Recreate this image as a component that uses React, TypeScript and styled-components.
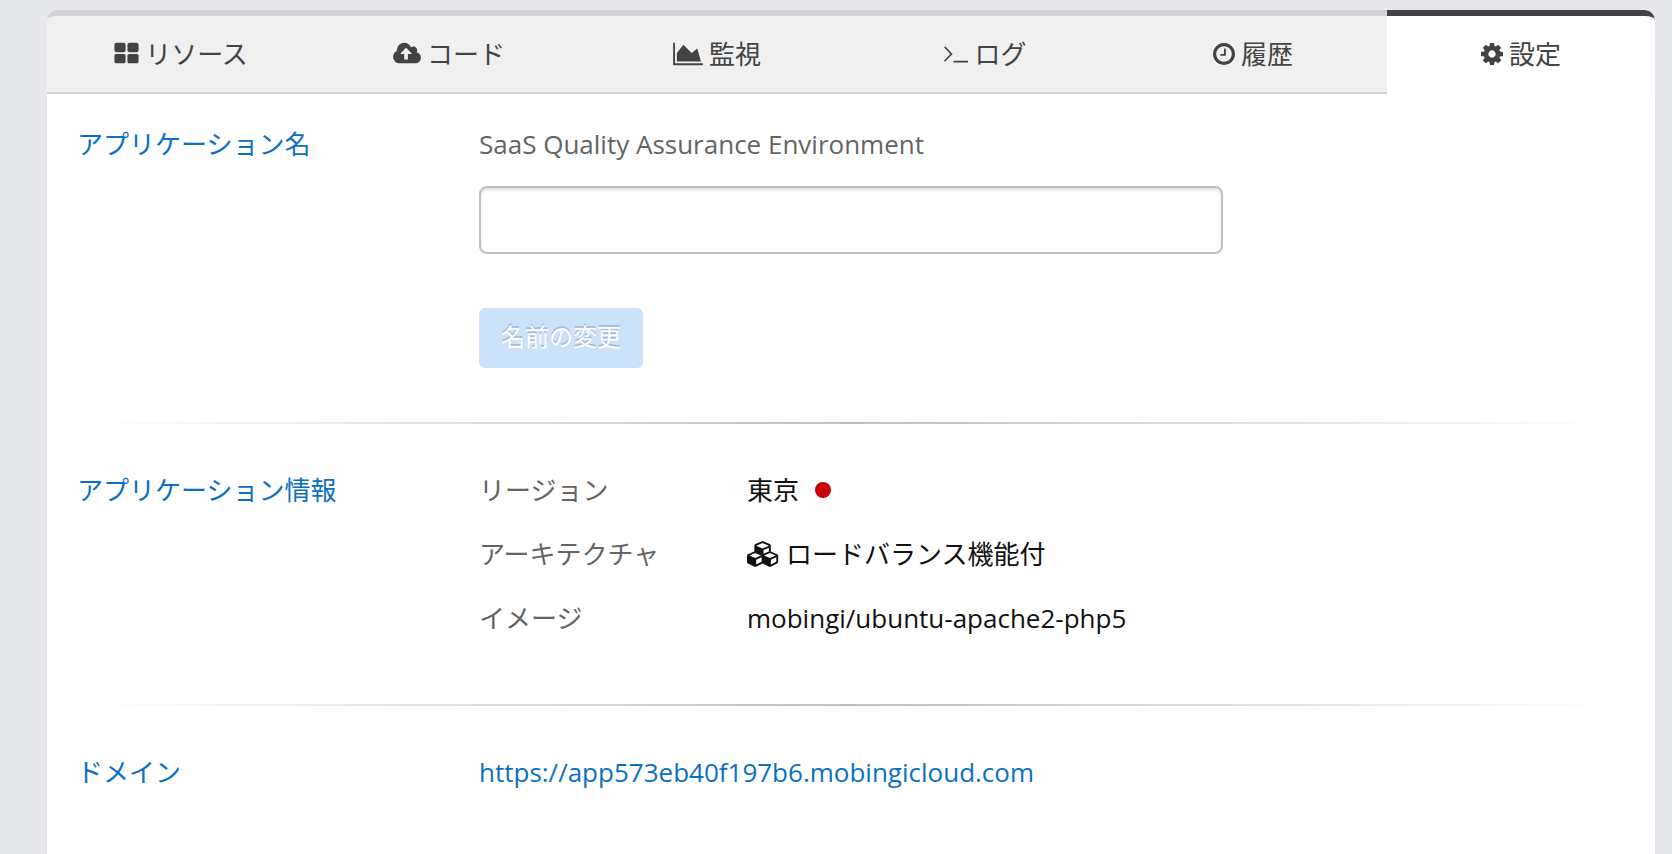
import React, { useState } from 'react';
import styled, { createGlobalStyle } from 'styled-components';

const GlobalStyle = createGlobalStyle`
  *, *::before, *::after { box-sizing: border-box; }
  body {
    margin: 0;
    background: #e6e8ec;
    color: #646464;
    font-family: "Open Sans", "Noto Sans CJK JP", sans-serif;
    font-size: 26px;
    line-height: 36px;
  }
`;

const Page = styled.main`
  display: flex;
  flex-direction: column;
  min-height: 100vh;
  padding: 10px 17px 0 47px;
`;

const Tabs = styled.nav`
  display: grid;
  grid-template-columns: repeat(6, 1fr);
  border-radius: 10px 10px 0 0;
  overflow: hidden;
`;

const Tab = styled.button<{ $active: boolean }>`
  display: flex;
  align-items: center;
  justify-content: center;
  gap: 6px;
  height: 84px;
  padding: 0;
  border: 0 solid;
  border-width: 6px 0 2px;
  border-color: ${(p) => (p.$active ? '#434343 transparent #fff' : '#d4d4d4 transparent #d4d4d4')};
  background: ${(p) => (p.$active ? '#fff' : '#f0f0f0')};
  color: #434343;
  font: inherit;
  cursor: pointer;

  &:first-child { border-top-left-radius: 10px; }
  &:last-child { border-top-right-radius: 10px; }
`;

const Panel = styled.div`
  flex: 1;
  background: #fff;
  box-shadow: 0 2px 4px rgba(0, 0, 0, 0.06);
`;

const Section = styled.section<{ $first?: boolean }>`
  display: grid;
  grid-template-columns: 3fr 9fr;
  padding: ${(p) => (p.$first ? '32px 0 54px' : '48px 0 68px')};
`;

const Heading = styled.h2`
  margin: 0;
  padding: 0 30px;
  color: #0b70c3;
  font-size: 26px;
  font-weight: 400;
`;

const Divider = styled.hr`
  height: 2px;
  margin: 0 48px;
  border: 0;
  background: linear-gradient(to right, transparent, #bfbfbf, transparent);
`;

const NameForm = styled.form`
  display: flex;
  flex-direction: column;
  align-items: flex-start;
  width: 66.6667%;
  padding: 0 30px;
`;

const CurrentName = styled.p`
  margin: 0 0 24px;
`;

const NameInput = styled.input`
  width: 100%;
  height: 68px;
  margin-bottom: 54px;
  padding: 0 16px;
  border: 2px solid #c0c0c0;
  border-radius: 8px;
  background: #fff;
  box-shadow: inset 0 2px 3px rgba(0, 0, 0, 0.12);
  color: #111;
  font: inherit;
`;

const RenameButton = styled.button`
  height: 60px;
  padding: 0 22px 2px;
  border: 0;
  border-radius: 6px;
  background: #cbe2fa;
  color: #fff;
  font: inherit;
  font-size: 24px;
  text-shadow: 0 -2px 0 rgba(80, 90, 130, 0.3);
`;

const InfoList = styled.dl`
  display: grid;
  grid-template-columns: 2fr 7fr;
  row-gap: 28px;
  margin: 0;
`;

const Term = styled.dt`
  padding-left: 30px;
`;

const Detail = styled.dd`
  display: flex;
  align-items: center;
  gap: 6px;
  margin: 0;
  padding-left: 30px;
  color: #111;
`;

const RegionDot = styled.span`
  width: 16px;
  height: 16px;
  margin-left: 10px;
  border-radius: 50%;
  background: #c70003;
`;

const DomainLink = styled.a`
  justify-self: start;
  padding: 0 30px;
  color: #0b70c3;
  text-decoration: none;
`;

const Glyph = styled.svg`
  flex: none;
  height: 26px;
  fill: currentColor;
`;

type IconProps = { box: string; width: number; path: string };

const Icon = ({ box, width, path }: IconProps) => (
  <Glyph viewBox={box} width={width} aria-hidden="true">
    <path d={path} />
  </Glyph>
);

const grid: IconProps = {
  box: '0 0 1664 1792',
  width: 25,
  path: 'M768 1024v384q0 52-38 90t-90 38h-512q-52 0-90-38t-38-90v-384q0-52 38-90t90-38h512q52 0 90 38t38 90zm0-768v384q0 52-38 90t-90 38h-512q-52 0-90-38t-38-90v-384q0-52 38-90t90-38h512q52 0 90 38t38 90zm896 768v384q0 52-38 90t-90 38h-512q-52 0-90-38t-38-90v-384q0-52 38-90t90-38h512q52 0 90 38t38 90zm0-768v384q0 52-38 90t-90 38h-512q-52 0-90-38t-38-90v-384q0-52 38-90t90-38h512q52 0 90 38t38 90z',
};

const cloudUpload: IconProps = {
  box: '-64 0 1920 1792',
  width: 28,
  path: 'M1216 864q0-14-9-23l-352-352q-9-9-23-9t-23 9l-351 351q-10 12-10 24 0 14 9 23t23 9h224v352q0 13 9.500 22.500t22.500 9.500h192q13 0 22.500-9.500t9.500-22.500v-352h224q13 0 22.500-9.500t9.500-22.500zm640 288q0 159-112.500 271.500t-271.500 112.500h-1088q-185 0-316.500-131.500t-131.500-316.500q0-130 70-240t188-165q-2-30-2-43 0-212 150-362t362-150q156 0 285.500 87t188.500 231q71-62 166-62 106 0 181 75t75 181q0 76-41 138 130 31 213.500 135.500t83.500 238.500z',
};

const areaChart: IconProps = {
  box: '0 0 2048 1792',
  width: 30,
  path: 'M2048 1536v128h-2048v-1536h128v1408h1920zm-384-1024l256 896h-1664v-576l448-576 576 576z',
};

const terminal: IconProps = {
  box: '0 0 25 26',
  width: 25,
  path: 'M1 6.300 2.100 5.200 9.600 13 2.100 20.800 1 19.700 7.300 13zM10.500 19.800h14.500v1.800h-14.500z',
};

const clock: IconProps = {
  box: '128 0 1536 1792',
  width: 22,
  path: 'M1024 544v448q0 14-9 23t-23 9h-320q-14 0-23-9t-9-23v-64q0-14 9-23t23-9h224v-352q0-14 9-23t23-9h64q14 0 23 9t9 23zm416 352q0-148-73-273t-198-198-273-73-273 73-198 198-73 273 73 273 198 198 273 73 273-73 198-198 73-273zm224 0q0 209-103 385.500t-279.500 279.500-385.500 103-385.500-103-279.500-279.500-103-385.500 103-385.500 279.500-279.500 385.500-103 385.500 103 279.500 279.500 103 385.500z',
};

const cog: IconProps = {
  box: '128 0 1536 1792',
  width: 22,
  path: 'M1152 896q0-106-75-181t-181-75-181 75-75 181 75 181 181 75 181-75 75-181zm512-109v222q0 12-8 23t-20 13l-185 28q-19 54-39 91 35 50 107 138 10 12 10 25t-9 23q-27 37-99 108t-94 71q-12 0-26-9l-138-108q-44 23-91 38-16 136-29 186-7 28-36 28h-222q-14 0-24.500-8.500t-11.500-21.500l-28-184q-49-16-90-37l-141 107q-10 9-25 9-14 0-25-11-126-114-165-168-7-10-7-23 0-12 8-23 15-21 51-66.500t54-70.500q-27-50-41-99l-183-27q-13-2-21-12.500t-8-23.500v-222q0-12 8-23t19-13l186-28q14-46 39-92-40-57-107-138-10-12-10-24 0-10 9-23 26-36 98.500-107.500t94.500-71.500q13 0 26 10l138 107q44-23 91-38 16-136 29-186 7-28 36-28h222q14 0 24.500 8.500t11.500 21.500l28 184q49 16 90 37l142-107q9-9 24-9 13 0 25 10 129 119 165 170 7 8 7 22 0 12-8 23-15 21-51 66.500t-54 70.500q26 50 41 98l183 28q13 2 21 12.500t8 23.500z',
};

const cubes: IconProps = {
  box: '0 0 2304 1792',
  width: 33,
  path: 'M640 1632l384-192v-314l-384 164v342zm-64-454l404-173-404-173-404 173zm1088 454l384-192v-314l-384 164v342zm-64-454l404-173-404-173-404 173zm-448-293l384-165v-266l-384 164v267zm-64-379l441-189-441-189-441 189zm1088 518v416q0 36-19 67t-52 47l-448 224q-25 14-57 14t-57-14l-448-224q-4-2-7-4-2 2-7 4l-448 224q-25 14-57 14t-57-14l-448-224q-33-16-52-47t-19-67v-416q0-38 21.500-70t56.500-48l434-186v-400q0-38 21.500-70t56.500-48l448-192q23-10 50-10t50 10l448 192q35 16 56.500 48t21.500 70v400l434 186q36 16 57 48t21 70z',
};

const tabs = [
  { label: 'リソース', icon: grid },
  { label: 'コード', icon: cloudUpload },
  { label: '監視', icon: areaChart },
  { label: 'ログ', icon: terminal },
  { label: '履歴', icon: clock },
  { label: '設定', icon: cog },
];

export default function App() {
  const [active, setActive] = useState('設定');
  const [name, setName] = useState('');

  return (
    <>
      <GlobalStyle />
      <Page>
        <Tabs>
          {tabs.map(({ label, icon }) => (
            <Tab
              key={label}
              type="button"
              $active={label === active}
              aria-current={label === active ? 'page' : undefined}
              onClick={() => setActive(label)}
            >
              <Icon {...icon} />
              {label}
            </Tab>
          ))}
        </Tabs>
        <Panel>
          <Section $first>
            <Heading>
              <label htmlFor="app-name">アプリケーション名</label>
            </Heading>
            <NameForm onSubmit={(e) => e.preventDefault()}>
              <CurrentName>SaaS Quality Assurance Environment</CurrentName>
              <NameInput id="app-name" type="text" value={name} onChange={(e) => setName(e.target.value)} />
              <RenameButton type="submit" disabled={!name}>
                名前の変更
              </RenameButton>
            </NameForm>
          </Section>
          <Divider />
          <Section>
            <Heading>アプリケーション情報</Heading>
            <InfoList>
              <Term>リージョン</Term>
              <Detail>
                東京
                <RegionDot />
              </Detail>
              <Term>アーキテクチャ</Term>
              <Detail>
                <Icon {...cubes} />
                ロードバランス機能付
              </Detail>
              <Term>イメージ</Term>
              <Detail>mobingi/ubuntu-apache2-php5</Detail>
            </InfoList>
          </Section>
          <Divider />
          <Section>
            <Heading>ドメイン</Heading>
            <DomainLink href="https://app573eb40f197b6.mobingicloud.com">
              https://app573eb40f197b6.mobingicloud.com
            </DomainLink>
          </Section>
        </Panel>
      </Page>
    </>
  );
}
